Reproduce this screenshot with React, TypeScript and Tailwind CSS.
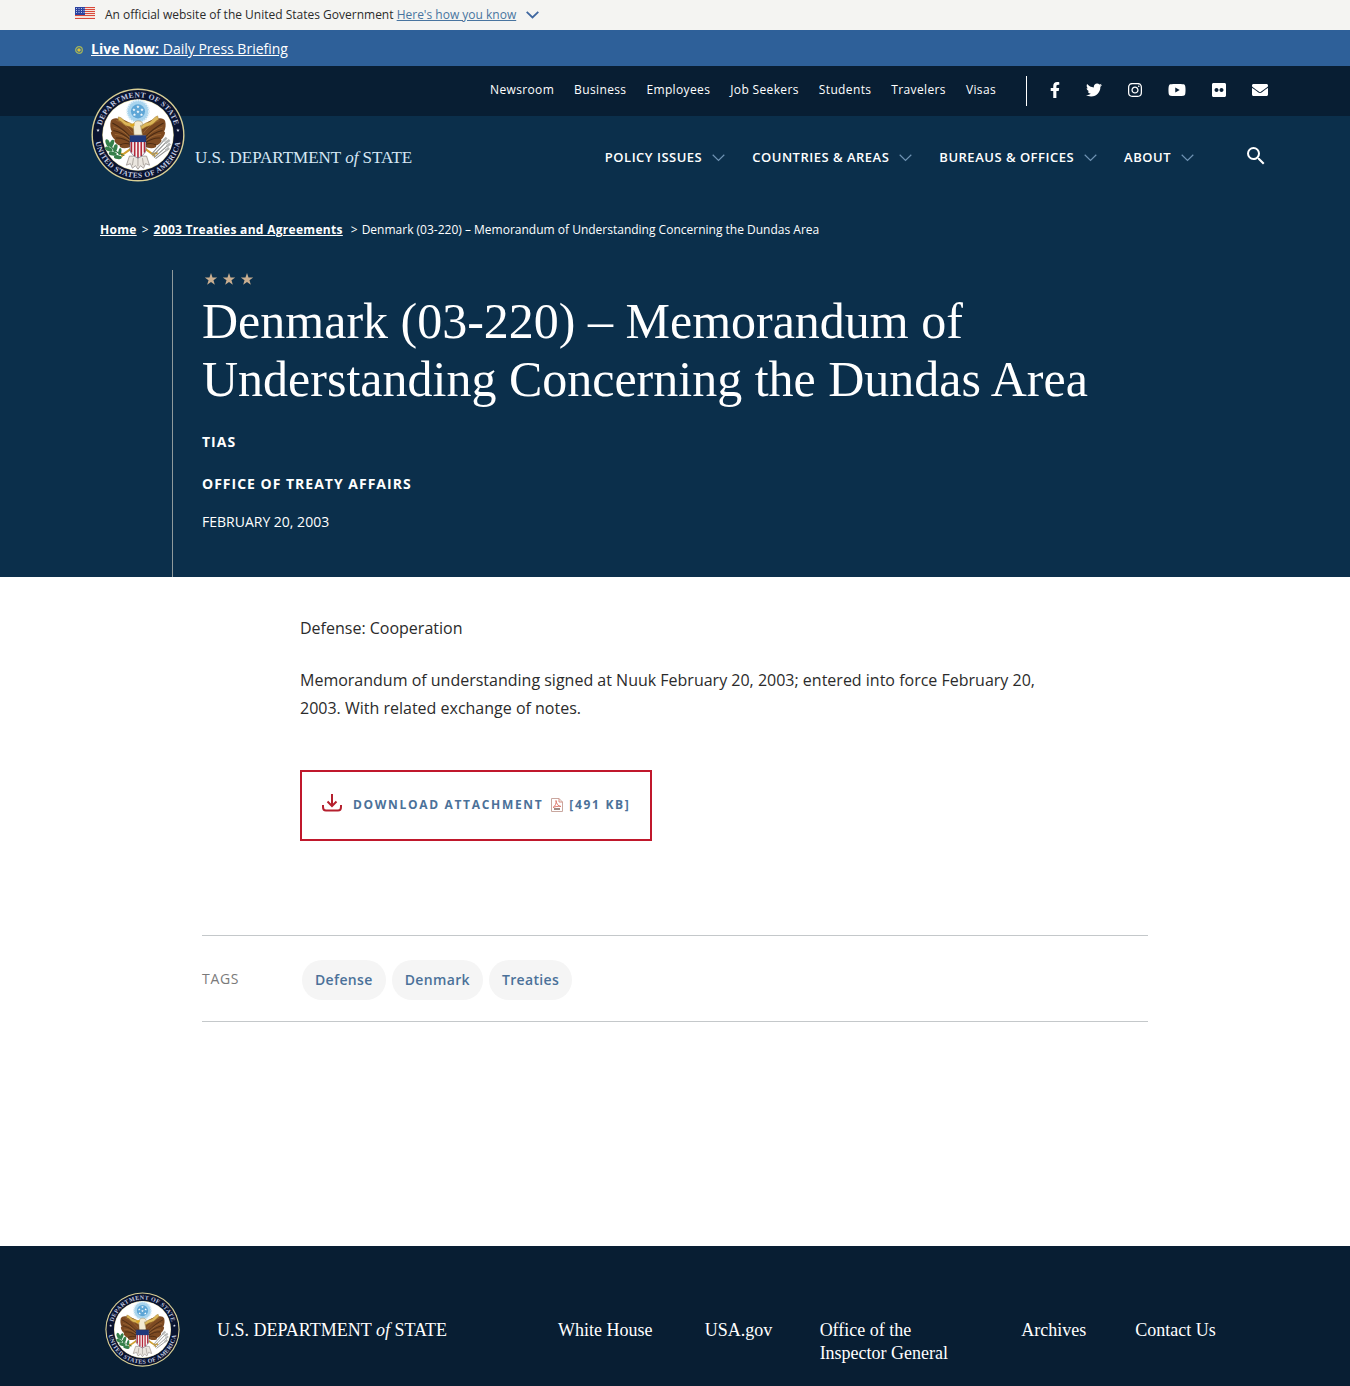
import { useId } from "react";
import { FaEnvelope, FaFacebookF, FaFlickr, FaInstagram, FaTwitter, FaYoutube } from "react-icons/fa";
import { MdSearch } from "react-icons/md";

const SERIF = "font-['Liberation_Serif',serif]";

function Star({ cx, cy, r }: { cx: number; cy: number; r: number }) {
  const points = Array.from({ length: 10 }, (_, i) => {
    const radius = i % 2 === 0 ? r : r * 0.4;
    const angle = (Math.PI / 5) * i - Math.PI / 2;
    return `${cx + radius * Math.cos(angle)},${cy + radius * Math.sin(angle)}`;
  }).join(" ");
  return <polygon points={points} />;
}

function Wing() {
  return (
    <g>
      <path
        d="M92 84 C82 74 70 68 58 67 C52 66 47 68 45 72 C43 79 44 87 47 93 L45 95 C46 101 49 106 53 109 L52 112 C55 117 59 120 63 121 L63 124 C70 128 79 127 86 122 L92 112 Z"
        fill="#7d4a22"
      />
      <path
        d="M48 76 C60 82 72 90 84 104 M50 91 C60 93 72 98 83 109 M55 106 C65 105 74 108 84 115 M63 120 C70 116 77 116 85 119"
        fill="none"
        stroke="#4c2c14"
        strokeWidth="2.2"
      />
      <path
        d="M56 71 C68 75 78 83 88 96 M50 84 C62 88 73 94 84 106 M53 99 C64 99 74 104 84 112"
        fill="none"
        stroke="#a9743f"
        strokeWidth="1.3"
      />
    </g>
  );
}

function Seal({ className }: { className: string }) {
  const id = useId();
  return (
    <svg viewBox="0 0 200 200" className={className} role="img" aria-label="Department of State seal">
      <circle cx="100" cy="100" r="99" fill="#d9cf95" />
      <circle cx="100" cy="100" r="96" fill="#0a1430" />
      <circle cx="100" cy="100" r="76" fill="#d9cf95" />
      <circle cx="100" cy="100" r="75" fill="#ffffff" />
      <defs>
        <path id={`${id}-top`} d="M20 100 A80 80 0 0 1 180 100" />
        <path id={`${id}-bottom`} d="M9 90 A91.500 91.500 0 1 0 191 90" />
      </defs>
      <g
        fill="#c3cbe2"
        fontFamily="Liberation Serif, serif"
        fontSize="16"
        fontWeight="700"
        letterSpacing="1"
        textAnchor="middle"
      >
        <text>
          <textPath href={`#${id}-top`} startOffset="50%">DEPARTMENT OF STATE</textPath>
        </text>
        <text>
          <textPath href={`#${id}-bottom`} startOffset="50%">UNITED STATES OF AMERICA</textPath>
        </text>
      </g>
      <g fill="#e4e8f4">
        <Star cx={15} cy={90} r={4} />
        <Star cx={185} cy={90} r={4} />
      </g>

      <g transform="translate(-6 -7) scale(1.07)">
        <circle cx="99" cy="53" r="22" fill="#a8d4ee" />
        <circle cx="99" cy="53" r="22" fill="none" stroke="#e3f1f9" strokeWidth="4" strokeDasharray="3 2" />
        <circle cx="99" cy="53" r="14" fill="#5ea6d6" />
        <g fill="#ffffff">
          <Star cx={99} cy={44} r={3.5} />
          <Star cx={91} cy={50} r={3.5} />
          <Star cx={107} cy={50} r={3.5} />
          <Star cx={99} cy={54} r={3.5} />
          <Star cx={92} cy={60} r={3.5} />
          <Star cx={106} cy={60} r={3.5} />
        </g>

        <Wing />
        <g transform="matrix(-1 0 0 1 198 0)">
          <Wing />
        </g>
        <path
          d="M60 64 C68 64 70 74 80 75 C88 76 92 84 99 84 C108 84 110 76 118 75 C127 74 130 64 138 62 L140 69 C133 72 130 80 120 82 C112 84 108 90 99 90 C90 90 86 83 78 82 C70 81 68 72 60 71 Z"
          fill="#dcb659"
          stroke="#9c7526"
          strokeWidth="1"
        />
        <path d="M91 100 L90 84 C89 76 94 71 101 72 C106 72 109 76 109 80 L104 81 L108 100 Z" fill="#f3ead2" stroke="#8d7440" strokeWidth="1" />
        <path d="M92 76 L83 79 L85 83 L92 82 Z" fill="#dba520" />

        <path d="M82 142 L76 160 L84 157 L88 166 L94 161 L99 168 L104 161 L110 166 L114 157 L122 160 L116 142 Z" fill="#ebe6df" stroke="#8d8580" strokeWidth="1.4" />
        <path d="M90 146 L88 160 M99 146 V162 M108 146 L110 160" stroke="#9a938d" strokeWidth="1.5" />
        <path d="M84 128 L70 138 L62 136 M114 128 L128 138 L138 136 M70 138 L66 143 M128 138 L133 143" fill="none" stroke="#d2a030" strokeWidth="4" />

        <path d="M72 141 C60 138 48 130 38 112" fill="none" stroke="#2c6b3c" strokeWidth="2" />
        <g fill="#35804a">
          <ellipse cx="39" cy="116" rx="4" ry="8" transform="rotate(-20 39 116)" />
          <ellipse cx="47" cy="117" rx="4" ry="8" transform="rotate(20 47 117)" />
          <ellipse cx="41" cy="128" rx="4" ry="8" transform="rotate(-65 41 128)" />
          <ellipse cx="54" cy="126" rx="4" ry="8" transform="rotate(15 54 126)" />
          <ellipse cx="49" cy="137" rx="4" ry="8" transform="rotate(-80 49 137)" />
          <ellipse cx="63" cy="133" rx="3" ry="7" transform="rotate(10 63 133)" />
          <ellipse cx="59" cy="144" rx="4" ry="8" transform="rotate(-80 59 144)" />
        </g>
        <path d="M128 142 L157 112 M131 145 L160 119 M134 147 L160 127 M126 138 L153 108" stroke="#8b8d8c" strokeWidth="2" />
        <path d="M149 112 L156 105 M154 116 L162 110 M156 123 L163 117 M154 131 L161 126" stroke="#b5b7b6" strokeWidth="5" />

        <path d="M83 101 H115 V125 C115 136 108 142 99 146 C90 142 83 136 83 125 Z" fill="#f7f3f3" />
        <path d="M86 112 V135 M92.500 112 V142 M99 112 V145 M105.500 112 V142 M112 112 V135" stroke="#b3283a" strokeWidth="3.200" />
        <path d="M83 101 H115 V114 H83 Z" fill="#20397c" />
        <path d="M83 101 H115 V125 C115 136 108 142 99 146 C90 142 83 136 83 125 Z" fill="none" stroke="#2a3157" strokeWidth="1" />
      </g>
    </svg>
  );
}

function Flag() {
  return (
    <svg viewBox="0 0 20 12" className="h-3 w-5" role="img" aria-label="U.S. flag">
      <rect width="20" height="12" fill="#f4e3dc" />
      <path d="M0 .5H20M0 2.500H20M0 4.500H20M0 6.500H20M0 8.500H20M0 11.500H20" stroke="#d9483b" />
      <rect width="10" height="8" fill="#2d43a0" />
      <path d="M1 1.500H10M1 3.500H10M1 5.500H10" stroke="#b9c3ea" strokeDasharray="1 1.500" />
    </svg>
  );
}

function Chevron({ className, width }: { className: string; width: string }) {
  return (
    <svg viewBox="0 0 13 8" className={className} fill="none" stroke="currentColor" strokeWidth={width} aria-hidden="true">
      <path d="M.7 .8 L6.500 6.500 L12.300 .8" />
    </svg>
  );
}

const topLinks = ["Newsroom", "Business", "Employees", "Job Seekers", "Students", "Travelers", "Visas"];
const mainLinks = ["Policy Issues", "Countries & Areas", "Bureaus & Offices", "About"];
const socials = [
  { label: "Facebook", icon: <FaFacebookF className="h-4 w-[10px]" /> },
  { label: "Twitter", icon: <FaTwitter className="size-4" /> },
  { label: "Instagram", icon: <FaInstagram className="h-4 w-[14px]" /> },
  { label: "YouTube", icon: <FaYoutube className="h-4 w-[18px]" /> },
  { label: "Flickr", icon: <FaFlickr className="h-4 w-[14px]" /> },
  { label: "Email", icon: <FaEnvelope className="size-4" /> },
];
const tags = ["Defense", "Denmark", "Treaties"];
const footerLinks = ["White House", "USA.gov", "Office of the Inspector General", "Archives", "Contact Us"];

export default function App() {
  return (
    <div className="bg-white font-['Open_Sans',sans-serif] text-[#2b2b2b]">
      <div className="bg-[#f4f4f2]">
        <div className="mx-auto flex h-[30px] max-w-[1200px] items-center text-xs">
          <span className="mr-[10px] pb-1"><Flag /></span>
          <p>
            An official website of the United States Government{" "}
            <button type="button" className="text-[#4874a0] underline">Here's how you know</button>
          </p>
          <Chevron className="ml-[10px] h-2 w-[13px] text-[#3f67a0]" width="1.8" />
        </div>
      </div>

      <div className="bg-[#2e6099] text-white">
        <div className="mx-auto flex h-9 max-w-[1200px] items-center gap-2 pt-[2px] text-sm">
          <svg viewBox="0 0 8 8" className="mt-[2px] size-2" aria-hidden="true">
            <circle cx="4" cy="4" r="3.300" fill="none" stroke="#a3b45a" strokeWidth="1.300" />
            <circle cx="4" cy="4" r="1.800" fill="#d9c23c" />
          </svg>
          <a href="#live" className="underline"><strong>Live Now:</strong> Daily Press Briefing</a>
        </div>
      </div>

      <header className="bg-[#0b2f4b] text-white">
        <div className="bg-[#081e33]">
          <div className="mx-auto flex h-[50px] max-w-[1200px] items-center justify-end pr-[7px]">
            <nav aria-label="Audience" className="mr-[30px] flex gap-5 pb-[2px] text-xs tracking-[0.03em]">
              {topLinks.map((t) => <a key={t} href="#top">{t}</a>)}
            </nav>
            <ul className="flex h-[30px] items-center gap-[26px] border-l border-white pb-[2px] pl-[23px]">
              {socials.map((s) => (
                <li key={s.label}><a href="#social" aria-label={s.label}>{s.icon}</a></li>
              ))}
            </ul>
          </div>
        </div>
        <div className="relative mx-auto flex h-[84px] max-w-[1200px] items-center justify-between pr-[7px] pl-[120px]">
          <a href="#home" aria-label="Home" className="absolute -top-7 left-4">
            <Seal className="size-[94px]" />
          </a>
          <a href="#home" className={`${SERIF} text-[17px] whitespace-nowrap text-[#d6e8f5]`}>
            U.S. DEPARTMENT <i>of</i> STATE
          </a>
          <div className="flex items-center">
            <nav aria-label="Main" className="flex gap-[27px] text-[13px] font-semibold tracking-[0.5px]">
              {mainLinks.map((t) => (
                <button key={t} type="button" className="flex items-center gap-[10px] uppercase">
                  {t}
                  <Chevron className="h-2 w-[13px] text-[#6f93b3]" width="1.2" />
                </button>
              ))}
            </nav>
            <button type="button" aria-label="Search" className="mb-1 ml-[50px]"><MdSearch className="size-6" /></button>
          </div>
        </div>

        <div className="mx-auto max-w-[1150px]">
          <nav aria-label="Breadcrumb" className="flex h-[60px] items-center text-xs">
            <a href="#home" className="font-bold tracking-wide underline">Home</a>
            <span className="mx-[5px]">&gt;</span>
            <a href="#treaties" className="font-bold tracking-wide underline">2003 Treaties and Agreements</a>
            <span className="mr-1 ml-2">&gt;</span>
            <span>Denmark (03-220) – Memorandum of Understanding Concerning the Dundas Area</span>
          </nav>
          <div className="mx-[72px] mt-[10px] border-l border-[#8f9a9c] pb-[45px] pl-[29px]">
            <svg viewBox="0 0 54 18" className="h-[18px] w-[54px]" fill="#c9ae90" aria-hidden="true">
              <Star cx={9} cy={9.5} r={6.5} />
              <Star cx={27} cy={9.5} r={6.5} />
              <Star cx={45} cy={9.5} r={6.5} />
            </svg>
            <h1 className={`${SERIF} mt-1 text-[50px] leading-[58px]`}>
              Denmark (03-220) – Memorandum of Understanding Concerning the Dundas Area
            </h1>
            <p className="mt-6 text-sm font-bold tracking-[1px]">TIAS</p>
            <p className="mt-[22px] text-sm font-bold tracking-[1px]">OFFICE OF TREATY AFFAIRS</p>
            <p className="mt-[18px] text-sm">FEBRUARY 20, 2003</p>
          </div>
        </div>
      </header>

      <main className="mx-auto max-w-[946px] pt-[37px] pb-56">
        <div className="mx-auto max-w-[750px] text-base leading-7">
          <p>Defense: Cooperation</p>
          <p className="mt-6">
            Memorandum of understanding signed at Nuuk February 20, 2003; entered into force February 20, 2003. With
            related exchange of notes.
          </p>
          <a
            href="#attachment"
            className="mt-12 inline-flex h-[71px] items-center border-2 border-[#c0182c] px-5 pb-[2px] text-xs font-bold tracking-[0.14em] text-[#4b7199]"
          >
            <svg viewBox="0 0 20 18" className="mr-[11px] mb-1 h-[18px] w-5" fill="none" stroke="#b5202e" strokeWidth="2" aria-hidden="true">
              <path d="M10 0 V12 M5.500 7.500 L10 12 L14.500 7.500 M1 11 V13 C1 15.500 2.200 16.500 4 16.500 H16 C17.800 16.500 19 15.500 19 13 V11" />
            </svg>
            DOWNLOAD ATTACHMENT
            <svg viewBox="0 0 12 14" className="mr-[6px] ml-2 h-[14px] w-3" fill="none" aria-hidden="true">
              <path d="M.5 .5 H8 L11.500 4 V13.500 H.5 Z" fill="#fff" stroke="#c9a79f" />
              <path d="M8 .5 V4 H11.500" stroke="#d58c80" />
              <path d="M2 9.500 C4.500 8 5.500 5 5 2.500 C5.500 6 7 8 10 8.500 C7 8 4.500 8.500 2 9.500" stroke="#e07a6e" />
              <rect x="3" y="10" width="6" height="2" fill="#a08a84" />
            </svg>
            [491 KB]
          </a>
        </div>

        <section className="mt-[94px] flex h-[87px] items-center border-y border-[#c4c8ca] text-sm" aria-labelledby="tags">
          <h2 id="tags" className="w-[100px] font-medium tracking-wider text-[#7a7a7a]">TAGS</h2>
          <ul className="flex gap-[6px] pt-[2px] font-semibold tracking-wide text-[#4b7199]">
            {tags.map((t) => (
              <li key={t}>
                <a href="#tag" className="flex h-10 items-center rounded-full bg-[#f5f5f5] px-[13px]">{t}</a>
              </li>
            ))}
          </ul>
        </section>
      </main>

      <footer className="bg-[#081e33] text-white">
        <div className="mx-auto flex max-w-[1200px] items-start pt-[46px] pb-[19px] pl-[30px]">
          <Seal className="size-[75px] shrink-0" />
          <p className={`${SERIF} mt-6 ml-[37px] w-[341px] shrink-0 text-[18px] leading-7`}>
            U.S. DEPARTMENT <i>of</i> STATE
          </p>
          <ul className={`${SERIF} mt-[27px] grid flex-1 grid-cols-[147fr_115fr_202fr_114fr_140fr] text-[18px] leading-[23px]`}>
            {footerLinks.map((t) => (
              <li key={t}><a href="#footer" className="block max-w-[150px]">{t}</a></li>
            ))}
          </ul>
        </div>
      </footer>
    </div>
  );
}
